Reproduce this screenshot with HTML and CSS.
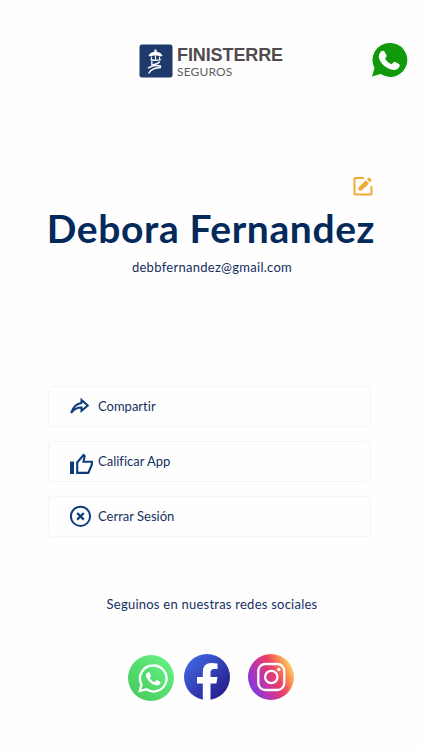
FILE: index.html
```html
<!DOCTYPE html>
<html lang="es">
<head>
    <meta charset="UTF-8">
    <meta name="viewport" content="width=device-width, initial-scale=1.0">
    <title>Finisterre Seguros</title>
    <link rel="stylesheet" href="styles.css">
</head>
<body>
    <header class="header">
        <div class="logo">
            <svg class="logo-mark" viewBox="0 0 34 34">
                <rect x="0.5" y="0.5" width="33" height="33" rx="2.5" fill="#1d3a6b"/>
                <path d="M9.500 11.500Q11 8.500 15.500 7.500V5.500h2v2Q22 8.500 23.500 11.500L22 12.500Q16.500 10.500 11 12.500z" fill="#fff"/>
                <g fill="none" stroke="#fff" stroke-linecap="round">
                    <path d="M12.500 13v2M16.500 12v3.500M20.500 13v2" stroke-width="1.100"/>
                    <path d="M12 15.700Q17 17 21.500 15.700" stroke-width="1.400"/>
                    <path d="M12.800 17.500v3.300Q18 20.500 20.500 18" stroke-width="1.300"/>
                    <path d="M9.500 23.800Q15 20.500 21.500 22M10 29Q12.500 24 21.500 23.500" stroke-width="1.500"/>
                </g>
            </svg>
            <div class="logo-text">
                <span class="logo-name">FINISTERRE</span>
                <span class="logo-sub">SEGUROS</span>
            </div>
        </div>
        <a class="chat" href="#" aria-label="WhatsApp">
            <svg viewBox="0 0 40 40">
                <path d="M20.500 1.500A18.500 18.500 0 0 0 4 28.500L1 38.500l10-3A18.500 18.500 0 1 0 20.500 1.500z" fill="#fff" stroke="#f3f3f3"/>
                <path d="M20.500 3A17 17 0 0 0 5.500 28L3 36.500l8.700-2.500A17 17 0 1 0 20.500 3z" fill="#109a0b"/>
                <path d="M11.500 12q1.700-2 3.600-1l2.500 4.200q.5 1-1.500 3.300 2.200 4.300 6.500 5.800l2.300-2.200q.8-.5 1.500-.2l3.900 2.400q.8.600.2 2.200-1.900 3.700-5.900 3.400Q18 29.200 13 23.700 7.300 16.500 11.500 12z" fill="#fff"/>
            </svg>
        </a>
    </header>

    <section class="profile">
        <a class="edit" href="#" aria-label="Editar">
            <svg viewBox="0 0 20 20">
                <path d="M11 2H2.500Q1.500 2 1.500 3v14.500q0 1 1 1h15q1 0 1-1V10" fill="none" stroke="#f0ac32" stroke-width="2"/>
                <path d="M5.500 11.500L12.800 4.200l3.200 3.200-7.300 7.100H5.500zM13.800 3.200l1.500-1.500q.6-.5 1.200 0l1.800 1.800q.5.600 0 1.200L17 6.400z" fill="#f0ac32"/>
            </svg>
        </a>
        <h1>Debora Fernandez</h1>
        <p>debbfernandez@gmail.com</p>
    </section>

    <nav class="menu">
        <a class="menu-item" href="#">
            <svg viewBox="0 0 24 24">
                <path d="M2.200 18.800Q5 10 12.500 9V6l6.300 5.500-6.300 5.300V13.500Q6.500 13.200 2.200 18.800z" fill="none" stroke="#0c3c7c" stroke-width="2"/>
            </svg>
            <span>Compartir</span>
        </a>
        <a class="menu-item like" href="#">
            <svg viewBox="0 0 24 24">
                <path d="M1 9.500h4V22H1z" fill="#0c3c7c"/>
                <path d="M8.200 10.500L14.500 3l1.200 1.200-1.200 5.600h8.400v2.700l-3.600 8.400H8.200z" fill="none" stroke="#0c3c7c" stroke-width="2.100"/>
            </svg>
            <span>Calificar App</span>
        </a>
        <a class="menu-item" href="#">
            <svg viewBox="0 0 24 24">
                <circle cx="11.500" cy="12.300" r="9.600" fill="none" stroke="#0c3c7c" stroke-width="2"/>
                <path d="M8.200 9l6.600 6.600M14.800 9l-6.600 6.600" stroke="#0c3c7c" stroke-width="2.200"/>
            </svg>
            <span>Cerrar Sesión</span>
        </a>
    </nav>

    <footer class="social">
        <p>Seguinos en nuestras redes sociales</p>
        <div class="social-links">
            <a class="wa" href="#" aria-label="WhatsApp">
                <svg viewBox="0 0 46 46">
                    <defs>
                        <linearGradient id="wa" x1="0" y1="1" x2="1" y2="0">
                            <stop offset="0" stop-color="#43c75c"/>
                            <stop offset="1" stop-color="#6af585"/>
                        </linearGradient>
                    </defs>
                    <circle cx="23" cy="23" r="23" fill="url(#wa)"/>
                    <path d="M25 10.500A13 13 0 0 0 13.500 29.600L11.800 36l6.500-1.700A13 13 0 1 0 25 10.500z" fill="none" stroke="#fff" stroke-width="2.300"/>
                    <path d="M19 18q1.200-1.300 2.500-.5l1.300 3q.4.800-1.100 2.500 1.700 3 4.900 4.300l1.700-2q.5-.5 1.100-.1l2.900 1.500q.6.500.1 1.600-1.300 2.400-4 2.200-4-.6-7.700-4.600-4.500-5.200-1.700-7.900z" fill="#fff"/>
                </svg>
            </a>
            <a class="fb" href="#" aria-label="Facebook">
                <svg viewBox="0 0 46 46">
                    <defs>
                        <linearGradient id="fb" x1="0" y1="0" x2="1" y2="1">
                            <stop offset="0.150" stop-color="#3e63dc"/>
                            <stop offset="0.900" stop-color="#261a8c"/>
                        </linearGradient>
                    </defs>
                    <circle cx="23" cy="23" r="23" fill="url(#fb)"/>
                    <path d="M18.800 45.700V29.500H13V23h5.800v-5.300Q18.800 9 27.500 9q3.500 0 6 .5V15H30Q26.500 15 26.500 18.500V23h7L32.400 29.500H26.500v16.200q-3.800.6-7.700 0z" fill="#fff"/>
                </svg>
            </a>
            <a class="ig" href="#" aria-label="Instagram">
                <svg viewBox="0 0 46 46">
                    <defs>
                        <linearGradient id="ig" x1="0.050" y1="0.700" x2="0.950" y2="0.250">
                            <stop offset="0" stop-color="#8238de"/>
                            <stop offset="0.350" stop-color="#c8359f"/>
                            <stop offset="0.600" stop-color="#ee3f65"/>
                            <stop offset="0.830" stop-color="#fb9451"/>
                            <stop offset="1" stop-color="#ffd36d"/>
                        </linearGradient>
                    </defs>
                    <circle cx="23" cy="23" r="23" fill="url(#ig)"/>
                    <g fill="none" stroke="#fff" stroke-width="2.300">
                        <rect x="10.300" y="10" width="26" height="26" rx="7"/>
                        <circle cx="23.300" cy="23" r="6.200"/>
                    </g>
                    <circle cx="30.800" cy="15.500" r="1.700" fill="#fff"/>
                </svg>
            </a>
        </div>
    </footer>
</body>
</html>
```
FILE: styles.css
```css
* {
    box-sizing: border-box;
}

body {
    margin: 0;
    height: 750px;
    font-family: Lato, 'Open Sans', sans-serif;
    font-variant-ligatures: none;
    background: #fefefe;
    color: #14305f;
    overflow: hidden;
}

a {
    color: inherit;
    text-decoration: none;
}

svg {
    display: block;
}

h1, p {
    margin: 0;
    white-space: nowrap;
}

.header {
    height: 176px;
    padding: 40px 13px 0 139px;
    display: flex;
    justify-content: space-between;
    align-items: flex-start;
}

.logo {
    display: flex;
    gap: 4px;
    padding-top: 4px;
}

.logo-mark {
    width: 34px;
    height: 34px;
}

.logo-text {
    display: flex;
    flex-direction: column;
    padding-top: 2px;
}

.logo-name {
    font: bold 18px/19px 'Liberation Sans', sans-serif;
    color: #514b4d;
    letter-spacing: -0.100px;
}

.logo-sub {
    font-size: 12px;
    line-height: 13px;
    color: #625d60;
    letter-spacing: 0.150px;
}

.chat svg {
    width: 40px;
    height: 40px;
}

/* Nombre y correo */
.profile {
    height: 210px;
    display: flex;
    flex-direction: column;
    align-items: center;
}

.edit {
    align-self: flex-end;
    margin-right: 49px;
}

.edit svg {
    width: 20px;
    height: 20px;
}

.profile h1 {
    margin-top: 8px;
    font-size: 39px;
    line-height: 48px;
    font-weight: bold;
    letter-spacing: 0.600px;
    color: #032a5b;
}

.profile p {
    margin-top: 6px;
    padding-left: 2px;
    font-size: 13px;
    line-height: 18px;
    letter-spacing: 0.280px;
}

.menu {
    display: flex;
    flex-direction: column;
    gap: 14px;
    padding: 0 51px 0 48px;
}

.menu-item {
    height: 41px;
    display: flex;
    align-items: center;
    gap: 5px;
    padding: 0 0 1px 20px;
    border: 1px solid #f5f5f6;
    border-radius: 4px;
    font-size: 13px;
    letter-spacing: 0;
}

.menu-item svg {
    width: 24px;
    height: 24px;
}

.menu-item.like svg {
    margin-top: 5px;
}

/* Redes sociales */
.social {
    padding-top: 58px;
}

.social p {
    padding-left: 2px;
    font-size: 13px;
    line-height: 18px;
    letter-spacing: 0.240px;
    text-align: center;
}

.social-links {
    display: flex;
    justify-content: center;
    margin-top: 41px;
}

.social-links svg {
    width: 46px;
    height: 46px;
}

.fb {
    margin: 0 18px 0 10px;
}

.wa {
    padding-top: 1px;
}
```
